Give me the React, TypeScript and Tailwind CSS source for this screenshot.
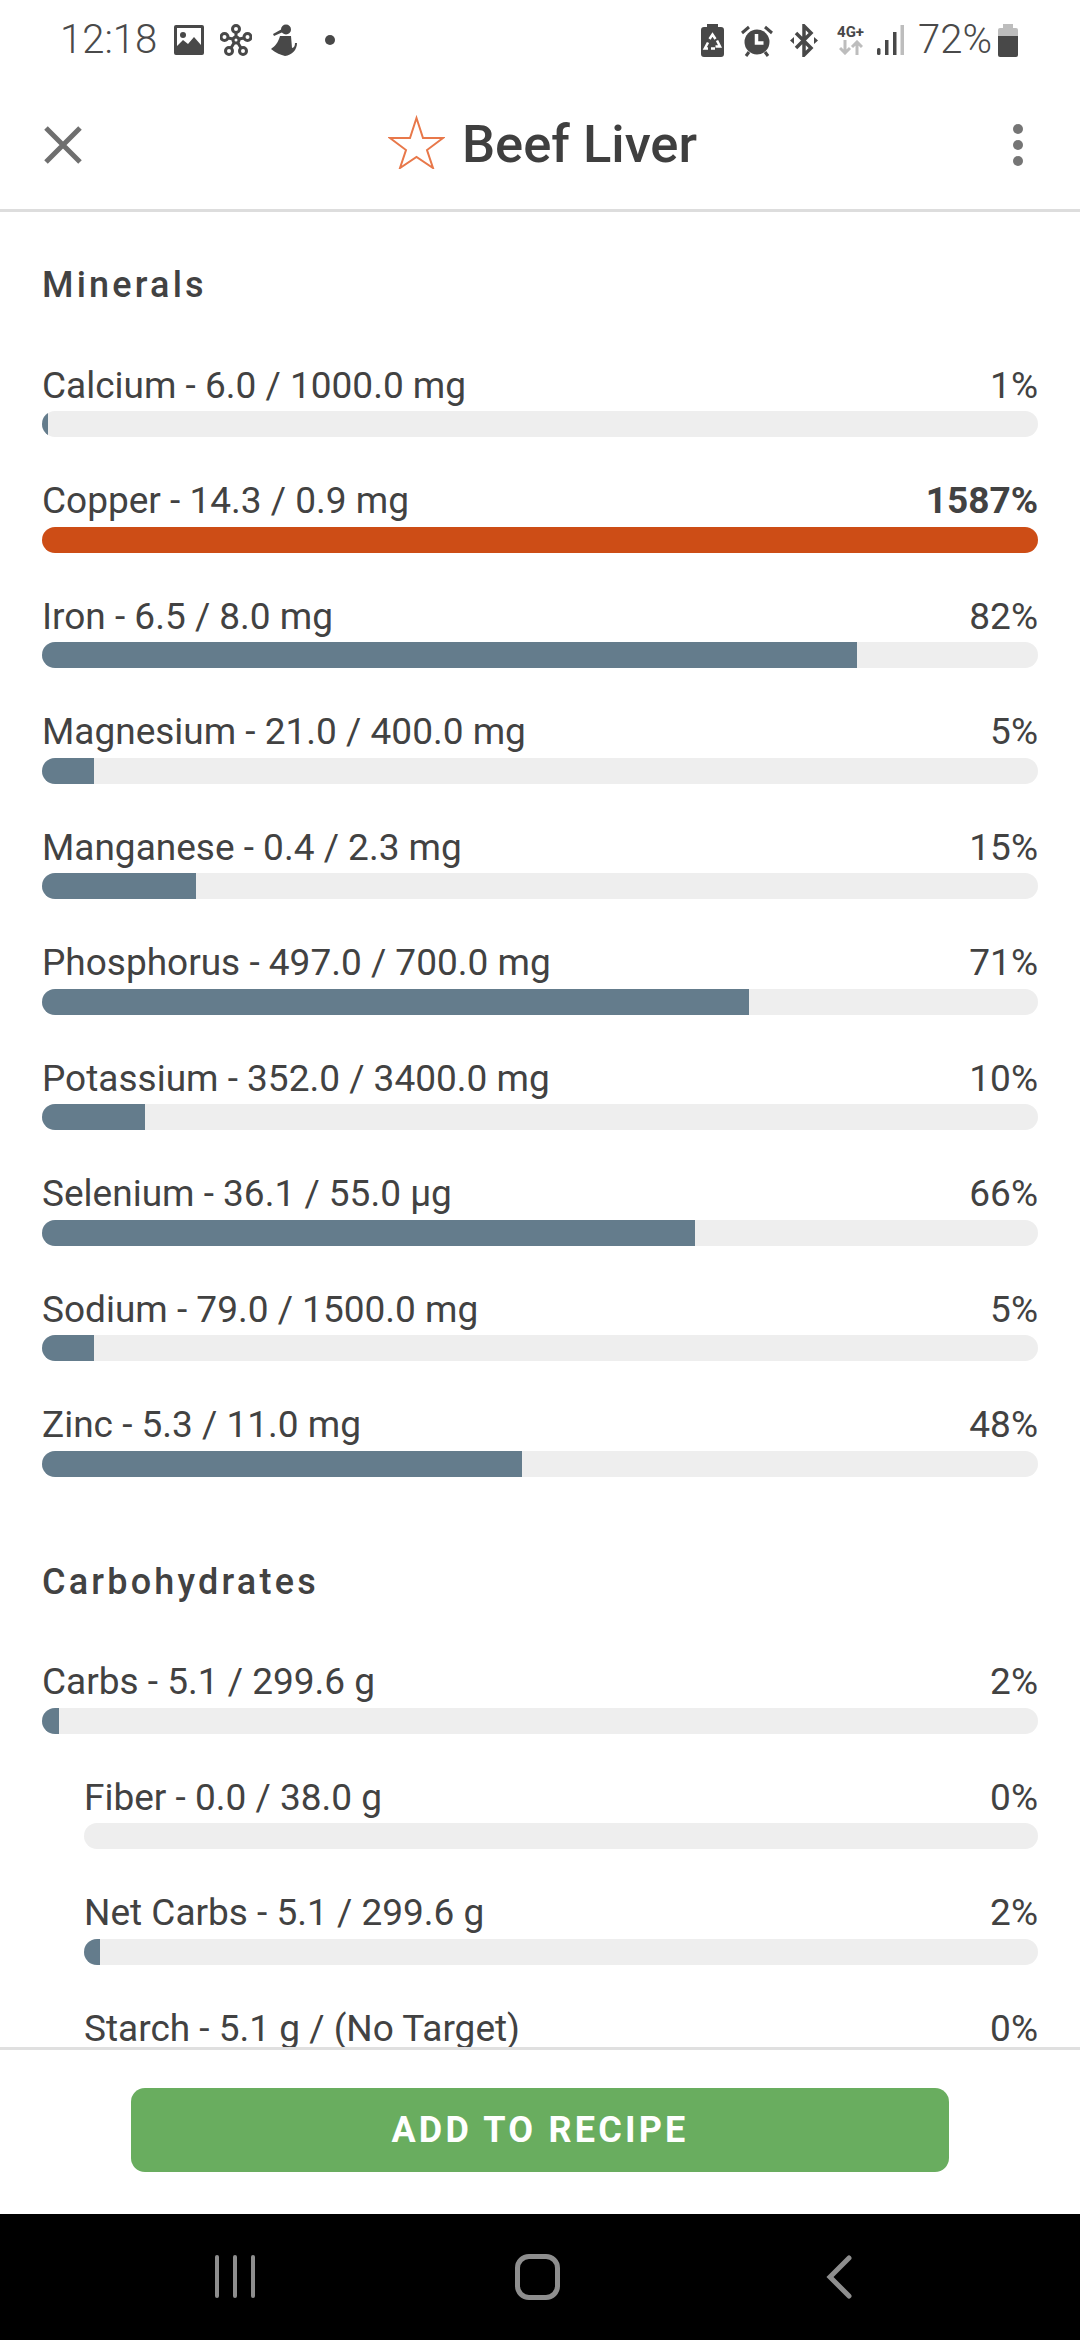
const minerals = [
  { name: 'Calcium - 6.0 / 1000.0 mg', pct: 1, fill: 0.6 },
  { name: 'Copper - 14.3 / 0.9 mg', pct: 1587, fill: 100 },
  { name: 'Iron - 6.5 / 8.0 mg', pct: 82, fill: 81.8 },
  { name: 'Magnesium - 21.0 / 400.0 mg', pct: 5, fill: 5.25 },
  { name: 'Manganese - 0.4 / 2.3 mg', pct: 15, fill: 15.5 },
  { name: 'Phosphorus - 497.0 / 700.0 mg', pct: 71, fill: 71 },
  { name: 'Potassium - 352.0 / 3400.0 mg', pct: 10, fill: 10.35 },
  { name: 'Selenium - 36.1 / 55.0 µg', pct: 66, fill: 65.6 },
  { name: 'Sodium - 79.0 / 1500.0 mg', pct: 5, fill: 5.27 },
  { name: 'Zinc - 5.3 / 11.0 mg', pct: 48, fill: 48.2 },
]

const carbs = [
  { name: 'Carbs - 5.1 / 299.6 g', pct: 2, fill: 1.7 },
  { name: 'Fiber - 0.0 / 38.0 g', pct: 0, fill: 0, sub: true },
  { name: 'Net Carbs - 5.1 / 299.6 g', pct: 2, fill: 1.7, sub: true },
  { name: 'Starch - 5.1 g / (No Target)', pct: 0, fill: 0, sub: true },
]

function Row({ name, pct, fill, sub }: { name: string; pct: number; fill: number; sub?: boolean }) {
  const over = pct > 100
  return (
    <div className={sub ? 'pl-[42px] mb-[42.5px]' : 'mb-[42.5px]'}>
      <div className="flex justify-between items-center h-[43px] mb-[4px] text-[37px] text-[#424242]">
        <span>{name}</span>
        <span className={over ? 'font-bold' : ''}>{pct}%</span>
      </div>
      <div className="h-[26px] rounded-full bg-[#eeeeee] overflow-hidden">
        <div
          className={over ? 'h-full bg-[#cd4d16]' : 'h-full bg-[#647c8c]'}
          style={{ width: `${fill}%` }}
        />
      </div>
    </div>
  )
}

function StatusLeft() {
  return (
    <div className="flex items-center">
      <span className="text-[40px] font-light text-[#4a4a4a] w-[114px] leading-none">12:18</span>
      <svg width="30" height="30" viewBox="0 0 30 30" className="fill-[#484848]">
        <path fillRule="evenodd" d="M2 0h26a2 2 0 0 1 2 2v26a2 2 0 0 1-2 2H2a2 2 0 0 1-2-2V2a2 2 0 0 1 2-2zM3 3v18l6-6 5 4 6-7 7 8V3z" />
        <circle cx="9" cy="10" r="3" />
      </svg>
      <svg width="32" height="32" viewBox="0 0 32 32" className="ml-[16px] fill-none stroke-[#484848]" strokeWidth="3">
        <circle cx="16" cy="5" r="3.5" />
        <circle cx="4.5" cy="13" r="3.5" />
        <circle cx="27.5" cy="13" r="3.5" />
        <circle cx="9" cy="27" r="3.5" />
        <circle cx="23" cy="27" r="3.5" />
        <circle cx="16" cy="16" r="3" />
        <path d="M16 9v4M8 14l5 1M24 14l-5 1M11 24l3-5M21 24l-3-5" />
      </svg>
      <svg width="26" height="32" viewBox="0 0 26 32" className="ml-[19px] fill-[#484848]">
        <circle cx="15" cy="5.500" r="5" />
        <path d="M11 5 2 10l1 2 9-4z" />
        <path d="M9 12h11l1 12c2-.5 3-2 3-5h2c0 7-5 12-12 13-4-1-9-3-14-7 4-3 7-6 9-13z" />
      </svg>
      <div className="ml-[28px] w-[10px] h-[10px] rounded-full bg-[#484848]" />
    </div>
  )
}

function StatusRight() {
  return (
    <div className="flex items-center">
      <svg width="23" height="33" viewBox="0 0 23 33" className="fill-[#484848]">
        <path d="M6 0h11v3h3a3 3 0 0 1 3 3v24a3 3 0 0 1-3 3H3a3 3 0 0 1-3-3V6a3 3 0 0 1 3-3h3z" />
        <path d="M8.500 15l3-4.500 3 4.500M16 16.500l3 6h-4.500M7 24.500H3.800L7 18.500M10 24.500h4" fill="none" stroke="#ffffff" strokeWidth="2.500" />
      </svg>
      <svg width="32" height="33" viewBox="0 0 32 33" className="ml-[17px]">
        <circle cx="16" cy="18" r="12.500" fill="#484848" />
        <path d="M15.500 10v9h7" fill="none" stroke="#fff" strokeWidth="3.500" />
        <path d="M1 9l7-6M31 9l-7-6M5 32l3-4M27 32l-3-4" stroke="#484848" strokeWidth="3" fill="none" />
      </svg>
      <svg width="28" height="33" viewBox="0 0 28 33" className="ml-[17px] fill-none stroke-[#484848]" strokeWidth="3.500">
        <path d="M6 9l15 15-7 7V2l7 7L6 24" />
        <path d="M4 13v7L0 16.500zM24 13v7l4-3.500z" fill="#484848" stroke="none" />
      </svg>
      <div className="ml-[17px] w-[31px] flex flex-col items-center">
        <span className="text-[15px] font-bold leading-[15px] text-[#484848]">4G+</span>
        <svg width="24" height="15" viewBox="0 0 24 15" className="stroke-[#bdbdbd] fill-none" strokeWidth="3">
          <path d="M6 0v12M1 8l5 5 5-5M18 15V3M13 7l5-5 5 5" />
        </svg>
      </div>
      <svg width="27" height="30" viewBox="0 0 27 30" className="ml-[11px]">
        <rect x="0" y="23" width="3.500" height="7" rx="1.500" fill="#484848" />
        <rect x="8" y="15" width="3.500" height="15" fill="#484848" />
        <rect x="16" y="7" width="3.500" height="23" fill="#484848" />
        <rect x="23.500" y="0" width="3.500" height="30" fill="#bdbdbd" />
      </svg>
      <span className="ml-[14px] text-[40px] font-light text-[#4a4a4a] leading-none">72%</span>
      <svg width="20" height="33" viewBox="0 0 20 33" className="ml-[6px]">
        <path d="M5 0h10v4h3a2 2 0 0 1 2 2v6H0V6a2 2 0 0 1 2-2h3z" fill="#bdbdbd" />
        <path d="M0 12h20v19a2 2 0 0 1-2 2H2a2 2 0 0 1-2-2z" fill="#484848" />
      </svg>
    </div>
  )
}

export default function App() {
  return (
    <div className="w-[1080px] h-[2340px] flex flex-col bg-white font-['Roboto',sans-serif]">
      <div className="h-[80px] pl-[60px] pr-[62px] flex items-center justify-between shrink-0">
        <StatusLeft />
        <StatusRight />
      </div>

      <div className="h-[132px] shrink-0 border-b-[3px] border-[#dddddd] flex items-center justify-between pl-[44px] pr-[57px]">
        <svg width="38" height="38" viewBox="0 0 38 38" className="stroke-[#6f6f6f]" strokeWidth="5">
          <path d="M2 2l34 34M36 2 2 36" />
        </svg>
        <div className="flex items-center ml-[-10px]">
          <svg width="57" height="54" viewBox="0 0 57 54" className="fill-none stroke-[#e8784a] mt-[-6px]" strokeWidth="2">
            <path d="M28.500 3l6.500 20h20L39 35l6 18-16.500-11L12 53l6-18L2 23h20z" />
          </svg>
          <span className="ml-[17px] text-[52.5px] font-medium text-[#3f3f3f] leading-none">Beef Liver</span>
        </div>
        <div className="flex flex-col gap-[6px]">
          <div className="w-[10px] h-[10px] rounded-full bg-[#757575]" />
          <div className="w-[10px] h-[10px] rounded-full bg-[#757575]" />
          <div className="w-[10px] h-[10px] rounded-full bg-[#757575]" />
        </div>
      </div>

      <div className="flex-1 min-h-0 overflow-hidden px-[42px] pt-[52px]">
        <h2 className="text-[36px] font-medium tracking-[3.2px] text-[#424242] leading-[42px] mb-[58px]">Minerals</h2>
        {minerals.map(m => (
          <Row key={m.name} name={m.name} pct={m.pct} fill={m.fill} />
        ))}
        <h2 className="text-[36px] font-medium tracking-[3.2px] text-[#424242] leading-[42px] mt-[84px] mb-[58px]">Carbohydrates</h2>
        {carbs.map(c => (
          <Row key={c.name} name={c.name} pct={c.pct} fill={c.fill} sub={c.sub} />
        ))}
      </div>

      <div className="h-[167px] shrink-0 border-t-[3px] border-[#e0e0e0] flex items-start justify-center pt-[38px]">
        <button className="w-[818px] h-[84px] rounded-[14px] bg-[#69ad5f] text-white text-[36px] font-bold tracking-[3.2px]">
          ADD TO RECIPE
        </button>
      </div>

      <div className="h-[126px] shrink-0 bg-black flex items-center">
        <div className="ml-[215px] flex gap-[14px] mt-[-1px]">
          <div className="w-[4px] h-[43px] rounded-full bg-[#8e8e8e]" />
          <div className="w-[4px] h-[43px] rounded-full bg-[#8e8e8e]" />
          <div className="w-[4px] h-[43px] rounded-full bg-[#8e8e8e]" />
        </div>
        <div className="ml-[260px] w-[45px] h-[46px] rounded-[14px] border-[5px] border-[#8e8e8e]" />
        <svg width="26" height="44" viewBox="0 0 26 44" className="ml-[266px] fill-none stroke-[#8e8e8e]" strokeWidth="5" strokeLinecap="round">
          <path d="M23 3 4 22l19 19" />
        </svg>
      </div>
    </div>
  )
}
